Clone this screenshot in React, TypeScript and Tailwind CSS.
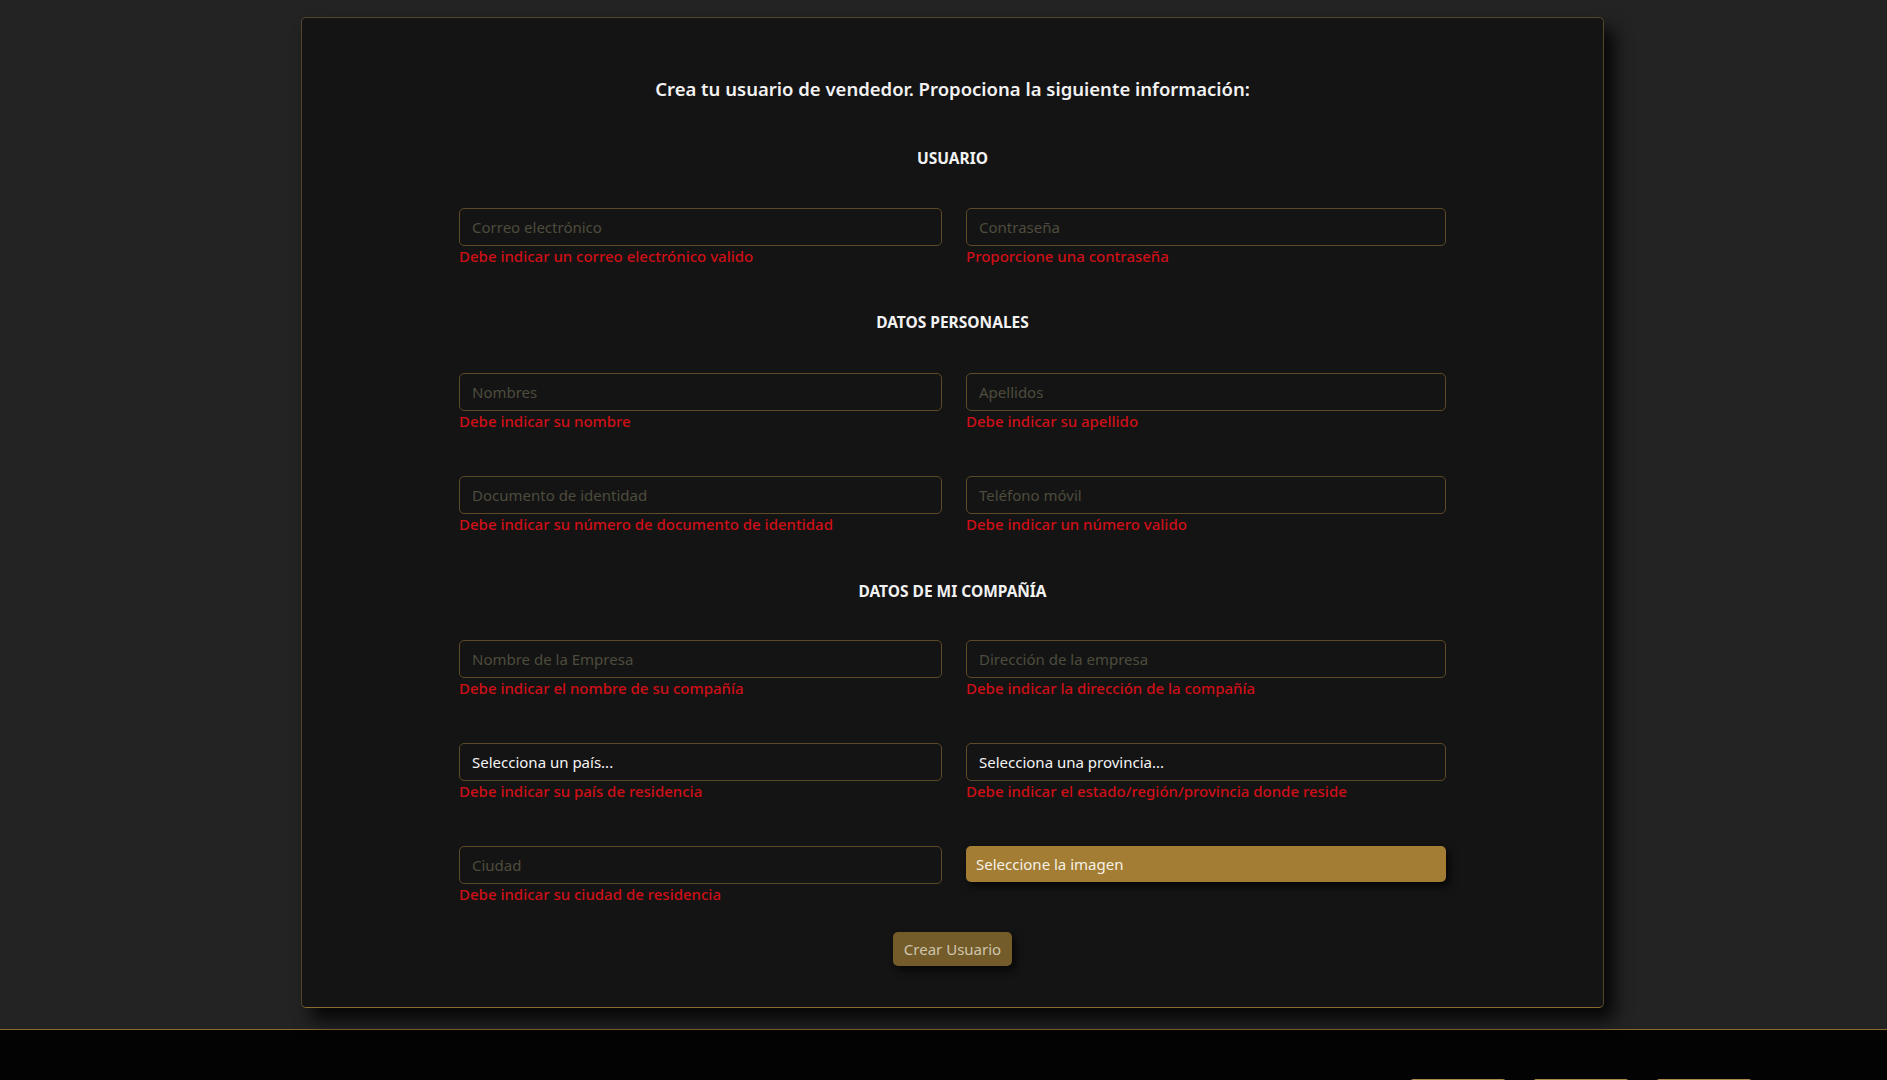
import React from "react";

type Field = {
  placeholder: string;
  error?: string;
  select?: boolean;
  file?: boolean;
};

function FormField({ field }: { field: Field }) {
  if (field.file) {
    return (
      <div className="flex flex-col">
        <button
          type="button"
          className="h-[36px] w-full rounded-[5px] bg-[#a27d33] px-[10px] text-left text-[15px] text-[#f6f1e6] shadow-[3px_4px_8px_rgba(0,0,0,0.75)]"
        >
          Seleccione la imagen
        </button>
      </div>
    );
  }
  return (
    <div className="flex flex-col">
      {field.select ? (
        <div className="flex h-[38px] w-full items-center rounded-[5px] border border-[#5e4a26] bg-[#141414] px-[12px] text-[15px] text-[#f4f4f4]">
          {field.placeholder}
        </div>
      ) : (
        <input
          type="text"
          placeholder={field.placeholder}
          className="h-[38px] w-full rounded-[5px] border border-[#5e4a26] bg-[#141414] px-[12px] text-[15px] text-[#ddd] outline-none placeholder:text-[#4e4c3d]"
        />
      )}
      {field.error && (
        <span className="h-[20px] text-[15px] leading-[20px] font-medium text-[#cf0f17]">
          {field.error}
        </span>
      )}
    </div>
  );
}

function Row({ left, right }: { left: Field; right: Field }) {
  return (
    <div className="grid h-[58px] grid-cols-[483px_480px] gap-x-[24px]">
      <FormField field={left} />
      <FormField field={right} />
    </div>
  );
}

function Heading({ children }: { children: React.ReactNode }) {
  return (
    <h3 className="h-[20px] text-center text-[15.5px] leading-[20px] font-bold text-[#f2f2f2]">
      {children}
    </h3>
  );
}

export default function App() {
  return (
    <div
      className="h-screen overflow-hidden bg-[#232323]"
      style={{ fontFamily: '"Noto Sans", "Open Sans", sans-serif' }}
    >
      <div className="flex justify-center pb-[21px] pl-[18px] pt-[17px]">
        <div className="w-[1303px] rounded-[5px] border border-[#54462a] border-b-[#8b6a2f] bg-[#141414] pb-[41px] pt-[58px] shadow-[10px_12px_18px_rgba(0,0,0,0.85)]">
          <h2 className="h-[26px] text-center text-[18.5px] leading-[26px] font-semibold text-[#f2f2f2]">
            Crea tu usuario de vendedor. Propociona la siguiente información:
          </h2>

          <div className="mx-auto mt-[46px] flex w-[987px] flex-col">
            <Heading>USUARIO</Heading>
            <div className="mt-[40px]">
              <Row
                left={{ placeholder: "Correo electrónico", error: "Debe indicar un correo electrónico valido" }}
                right={{ placeholder: "Contraseña", error: "Proporcione una contraseña" }}
              />
            </div>

            <div className="mt-[46px]">
              <Heading>DATOS PERSONALES</Heading>
            </div>
            <div className="mt-[41px] flex flex-col gap-[45px]">
              <Row
                left={{ placeholder: "Nombres", error: "Debe indicar su nombre" }}
                right={{ placeholder: "Apellidos", error: "Debe indicar su apellido" }}
              />
              <Row
                left={{ placeholder: "Documento de identidad", error: "Debe indicar su número de documento de identidad" }}
                right={{ placeholder: "Teléfono móvil", error: "Debe indicar un número valido" }}
              />
            </div>

            <div className="mt-[47px]">
              <Heading>DATOS DE MI COMPAÑÍA</Heading>
            </div>
            <div className="mt-[39px] flex flex-col gap-[45px]">
              <Row
                left={{ placeholder: "Nombre de la Empresa", error: "Debe indicar el nombre de su compañía" }}
                right={{ placeholder: "Dirección de la empresa", error: "Debe indicar la dirección de la compañía" }}
              />
              <Row
                left={{ placeholder: "Selecciona un país...", error: "Debe indicar su país de residencia", select: true }}
                right={{ placeholder: "Selecciona una provincia...", error: "Debe indicar el estado/región/provincia donde reside", select: true }}
              />
              <Row
                left={{ placeholder: "Ciudad", error: "Debe indicar su ciudad de residencia" }}
                right={{ placeholder: "", file: true }}
              />
            </div>

            <div className="mt-[28px] flex justify-center">
              <button
                type="submit"
                className="h-[34px] w-[119px] rounded-[5px] bg-[#735b2a] text-[15px] text-[#cfc6ad] shadow-[3px_4px_8px_rgba(0,0,0,0.75)]"
              >
                Crear Usuario
              </button>
            </div>
          </div>
        </div>
      </div>

      <footer className="h-[80px] border-t border-[#8a6a30] bg-[#030303]">
        <div className="flex justify-end gap-[27px] pr-[135px] pt-[49px]">
          <div className="h-[30px] w-[96px] rounded-[3px] border border-[#a8874a]" />
          <div className="h-[30px] w-[96px] rounded-[3px] border border-[#a8874a]" />
          <div className="h-[30px] w-[96px] rounded-[3px] border border-[#a8874a]" />
        </div>
      </footer>
    </div>
  );
}
